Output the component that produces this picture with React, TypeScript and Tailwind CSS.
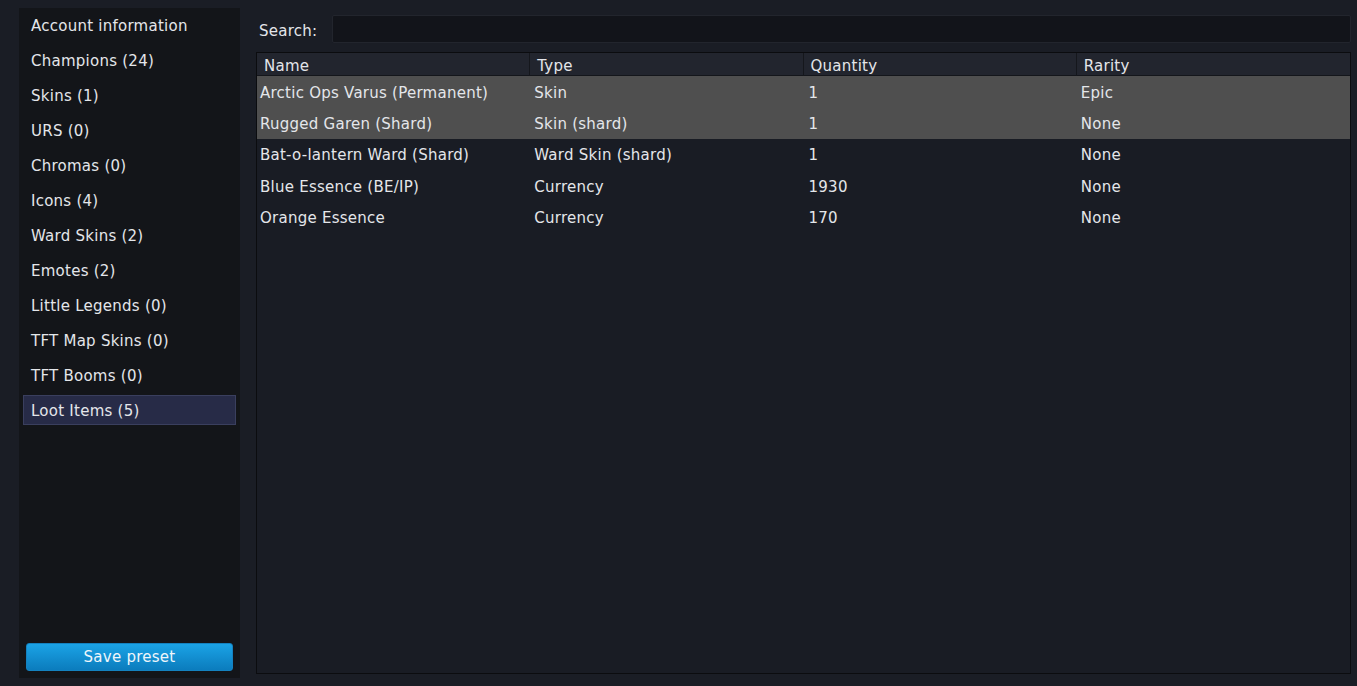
import React, { useState } from 'react';

type LootRow = {
  name: string;
  type: string;
  quantity: number;
  rarity: string;
};

const CATEGORIES = [
  'Account information',
  'Champions (24)',
  'Skins (1)',
  'URS (0)',
  'Chromas (0)',
  'Icons (4)',
  'Ward Skins (2)',
  'Emotes (2)',
  'Little Legends (0)',
  'TFT Map Skins (0)',
  'TFT Booms (0)',
  'Loot Items (5)',
];

const LOOT: LootRow[] = [
  { name: 'Arctic Ops Varus (Permanent)', type: 'Skin', quantity: 1, rarity: 'Epic' },
  { name: 'Rugged Garen (Shard)', type: 'Skin (shard)', quantity: 1, rarity: 'None' },
  { name: 'Bat-o-lantern Ward (Shard)', type: 'Ward Skin (shard)', quantity: 1, rarity: 'None' },
  { name: 'Blue Essence (BE/IP)', type: 'Currency', quantity: 1930, rarity: 'None' },
  { name: 'Orange Essence', type: 'Currency', quantity: 170, rarity: 'None' },
];

const COLUMNS = ['Name', 'Type', 'Quantity', 'Rarity'];

// Sidebar with category list and preset button
const Sidebar: React.FC<{ active: number; onSelect: (i: number) => void }> = ({ active, onSelect }) => {
  return (
    <div className="w-[221px] bg-[#131519] flex flex-col px-[4px] pt-[2px] pb-[7px]">
      <div className="flex flex-col gap-[5px]">
        {CATEGORIES.map((label, i) => (
          <div
            key={label}
            onClick={() => onSelect(i)}
            className={`h-[30px] flex items-center pl-[7px] pt-[2px] cursor-pointer border ${
              i === active ? 'bg-[#272b47] border-[#3a3f5e]' : 'border-transparent'
            }`}
          >
            {label}
          </div>
        ))}
      </div>
      <div className="flex-1" />
      <button className="mx-[3px] h-[28px] pt-[1px] rounded-[3px] border border-[#1482c0] bg-gradient-to-b from-[#1ba3e6] to-[#0b7cbd] text-[#eef6fb]">
        Save preset
      </button>
    </div>
  );
};

const LootTable: React.FC = () => {
  const [selected, setSelected] = useState<number[]>([0, 1]);

  const toggle = (i: number) =>
    setSelected((s) => (s.includes(i) ? s.filter((x) => x !== i) : [...s, i]));

  return (
    <div className="flex-1 mb-[4px] border border-[#0b0c0f] bg-[#191c24] flex flex-col">
      <div className="grid grid-cols-4 h-[23px] bg-[#22252e] border-b border-[#14161b]">
        {COLUMNS.map((col, i) => (
          <div
            key={col}
            className={`flex items-center pl-[7px] pt-[2px] ${i < 3 ? 'border-r border-[#15171c]' : ''}`}
          >
            {col}
          </div>
        ))}
      </div>
      {LOOT.map((row, i) => (
        <div
          key={row.name}
          onClick={() => toggle(i)}
          className={`grid grid-cols-4 h-[31.25px] pt-[3px] items-center ${selected.includes(i) ? 'bg-[#4f4f4f]' : ''}`}
        >
          <div className="pl-[3px]">{row.name}</div>
          <div className="pl-[4px]">{row.type}</div>
          <div className="pl-[5px]">{row.quantity}</div>
          <div className="pl-[4px]">{row.rarity}</div>
        </div>
      ))}
    </div>
  );
};

export default function App() {
  const [active, setActive] = useState(CATEGORIES.length - 1);
  const [query, setQuery] = useState('');

  return (
    <div
      className="w-[1357px] h-[686px] bg-[#1a1d25] text-[#e4e6ea] text-[15px] tracking-[0.25px] flex pl-[19px] pr-[6px] pt-[8px] pb-[8px] gap-[16px]"
      style={{ fontFamily: '"DejaVu Sans", Verdana, sans-serif' }}
    >
      <Sidebar active={active} onSelect={setActive} />
      <div className="flex-1 flex flex-col">
        <div className="flex items-center h-[28px] mt-[7px] mb-[9px]">
          <span className="pl-[3px] pt-[4px] w-[76px]">Search:</span>
          <input
            value={query}
            onChange={(e) => setQuery(e.target.value)}
            className="flex-1 h-[28px] bg-[#12141a] border border-[#22252d] rounded-[2px] outline-none px-2 text-[#e4e6ea]"
          />
        </div>
        <LootTable />
      </div>
    </div>
  );
}
